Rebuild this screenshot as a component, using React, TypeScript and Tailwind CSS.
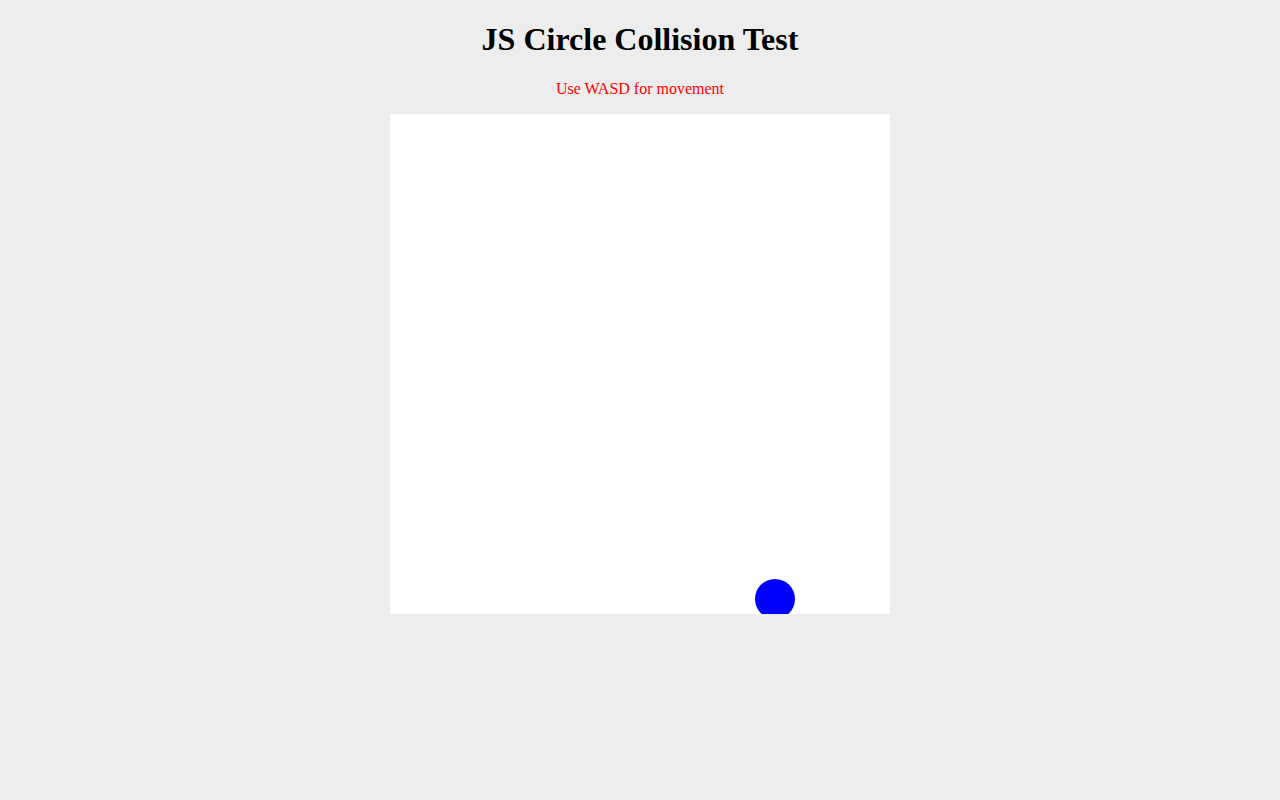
export default function App() {
  return (
    <div className="min-h-[800px] bg-[#ededed] text-center font-['Liberation_Serif',serif]">
      <h1 className="pt-[21px] text-[32px] leading-[37px] font-bold text-black">JS Circle Collision Test</h1>
      <p className="mt-[22px] text-base leading-[18px] text-[#ff0000]">Use WASD for movement</p>
      <div className="relative mx-auto mt-[16px] h-[500px] w-[500px] overflow-hidden bg-white">
        <div className="absolute left-[365px] top-[465px] h-[40px] w-[40px] rounded-full bg-[#0000ff]" />
      </div>
    </div>
  );
}
